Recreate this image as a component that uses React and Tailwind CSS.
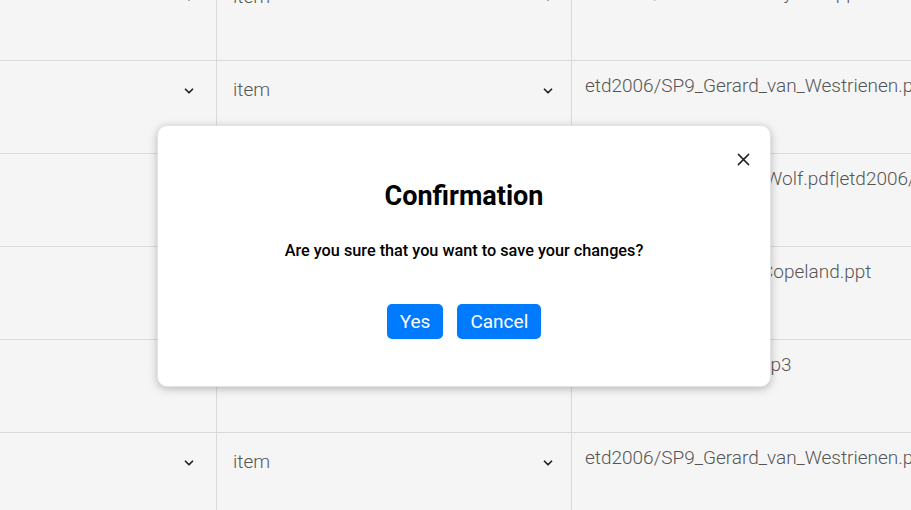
import React from "react";

function Chevron() {
  return (
    <svg width="14" height="14" viewBox="0 0 24 24" fill="none" stroke="#222" strokeWidth="3" strokeLinecap="round" strokeLinejoin="round">
      <path d="M6 9l6 6 6-6" />
    </svg>
  );
}

const rows = [
  { item: "item", path: "etd2006/SP10_Jean_Joycelin.ppt" },
  { item: "item", path: "etd2006/SP9_Gerard_van_Westrienen.pdf" },
  { item: "item", path: "etd2006/SP5_Hanns_Wolf.pdf|etd2006/SP5_slides.pdf" },
  { item: "item", path: "etd2006/SP3_Marta_Copeland.ppt" },
  { item: "item", path: "etd2006/SP4_audio.mp3" },
  { item: "item", path: "etd2006/SP9_Gerard_van_Westrienen.pdf" },
];

export default function App() {
  return (
    <div
      className="relative w-[911px] h-[510px] overflow-hidden bg-[#f5f5f5]"
      style={{ fontFamily: "Roboto, 'Liberation Sans', sans-serif" }}
    >
      <div className="-mt-[32px] flex flex-col">
        {rows.map((r, i) => (
          <div key={i} className="flex h-[93px] border-b border-[#d9d9d9] shrink-0">
            <div className="w-[217px] shrink-0 border-r border-[#d9d9d9] flex justify-end pr-[20px] pt-[23px]">
              <Chevron />
            </div>
            <div className="w-[355px] shrink-0 border-r border-[#d9d9d9] flex justify-between pl-[16px] pr-[16px] pt-[17px]">
              <span className="text-[19px] font-light text-[#555] leading-[24px]">{r.item}</span>
              <span className="pt-[6px]"><Chevron /></span>
            </div>
            <div className="flex-1 min-w-0 overflow-hidden pl-[13px] pt-[13px]">
              <span className="block whitespace-nowrap text-[19px] font-light text-[#555] leading-[24px]">{r.path}</span>
            </div>
          </div>
        ))}
      </div>

      <div className="absolute left-[157px] top-[125px] w-[614px] h-[262px] bg-white rounded-[10px] border border-[#e2e2e2] shadow-[0_2px_8px_rgba(0,0,0,0.25)] flex flex-col items-center">
        <button className="absolute right-[20px] top-[26px] w-[14px] h-[14px] flex items-center justify-center">
          <svg width="13" height="13" viewBox="0 0 14 14" fill="none" stroke="#222" strokeWidth="1.6" strokeLinecap="round">
            <path d="M1.5 1.5l11 11M12.5 1.5l-11 11" />
          </svg>
        </button>
        <h2 className="mt-[54px] text-[27px] font-bold leading-[32px] text-black">Confirmation</h2>
        <p className="mt-[27px] text-[16.25px] font-medium leading-[24px] text-black">
          Are you sure that you want to save your changes?
        </p>
        <div className="mt-[41px] flex gap-[14px]">
          <button className="h-[35px] px-[13px] rounded-[5px] bg-[#007bff] text-white text-[19px] leading-[24px]">Yes</button>
          <button className="h-[35px] px-[13px] rounded-[5px] bg-[#007bff] text-white text-[19px] leading-[24px]">Cancel</button>
        </div>
      </div>
    </div>
  );
}
